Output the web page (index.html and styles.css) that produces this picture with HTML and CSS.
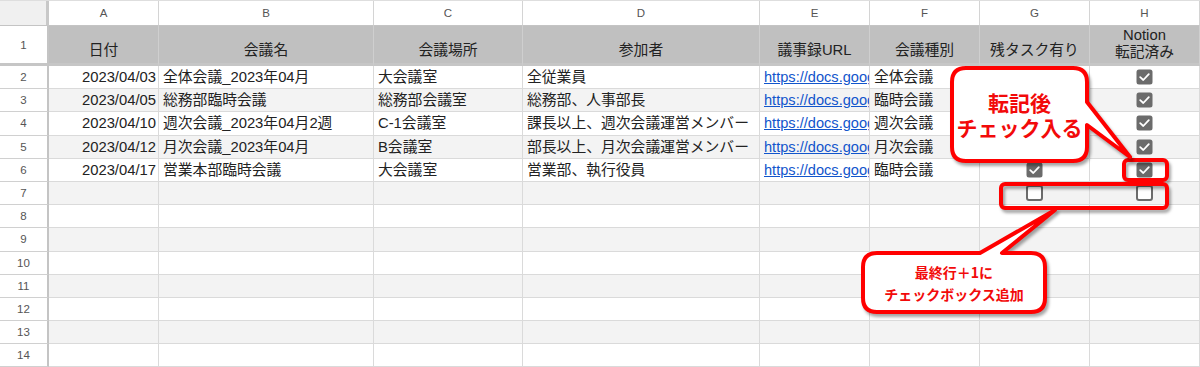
FILE: index.html
```html
<!DOCTYPE html>
<html lang="ja">
<head>
<meta charset="utf-8">
<title>会議一覧</title>
<link rel="stylesheet" href="styles.css">
</head>
<body>
<div class="page">
  <div class="sheet">
    <!-- column letters -->
    <div class="corner"></div>
    <div class="colh">A</div><div class="colh">B</div><div class="colh">C</div><div class="colh">D</div>
    <div class="colh">E</div><div class="colh">F</div><div class="colh">G</div><div class="colh">H</div>

    <!-- row 1 -->
    <div class="rowh rowh-1">1</div>
    <div class="hd">日付</div><div class="hd">会議名</div><div class="hd">会議場所</div><div class="hd">参加者</div>
    <div class="hd">議事録URL</div><div class="hd">会議種別</div><div class="hd">残タスク有り</div>
    <div class="hd hd-wrap">Notion<br>転記済み</div>

    <!-- row 2 -->
    <div class="rowh">2</div>
    <div class="c num">2023/04/03</div><div class="c">全体会議_2023年04月</div><div class="c">大会議室</div><div class="c">全従業員</div>
    <div class="c url"><span class="link">https://docs.goog</span></div><div class="c">全体会議</div>
    <div class="c mid"></div>
    <div class="c mid"><svg class="cb" viewBox="0 0 17 16"><rect x="0.5" y="0.5" width="16" height="15" rx="2.5" fill="#6b6b6b"/><path d="M4.2 8.2 L7.3 11 L12.8 5.2" stroke="#fff" stroke-width="1.8" fill="none" stroke-linecap="round" stroke-linejoin="round"/></svg></div>

    <!-- row 3 -->
    <div class="rowh">3</div>
    <div class="c b num">2023/04/05</div><div class="c b">総務部臨時会議</div><div class="c b">総務部会議室</div><div class="c b">総務部、人事部長</div>
    <div class="c b url"><span class="link">https://docs.goog</span></div><div class="c b">臨時会議</div>
    <div class="c b mid"></div>
    <div class="c b mid"><svg class="cb" viewBox="0 0 17 16"><rect x="0.5" y="0.5" width="16" height="15" rx="2.5" fill="#6b6b6b"/><path d="M4.2 8.2 L7.3 11 L12.8 5.2" stroke="#fff" stroke-width="1.8" fill="none" stroke-linecap="round" stroke-linejoin="round"/></svg></div>

    <!-- row 4 -->
    <div class="rowh">4</div>
    <div class="c num">2023/04/10</div><div class="c">週次会議_2023年04月2週</div><div class="c">C-1会議室</div><div class="c">課長以上、週次会議運営メンバー</div>
    <div class="c url"><span class="link">https://docs.goog</span></div><div class="c">週次会議</div>
    <div class="c mid"></div>
    <div class="c mid"><svg class="cb" viewBox="0 0 17 16"><rect x="0.5" y="0.5" width="16" height="15" rx="2.5" fill="#6b6b6b"/><path d="M4.2 8.2 L7.3 11 L12.8 5.2" stroke="#fff" stroke-width="1.8" fill="none" stroke-linecap="round" stroke-linejoin="round"/></svg></div>

    <!-- row 5 -->
    <div class="rowh">5</div>
    <div class="c b num">2023/04/12</div><div class="c b">月次会議_2023年04月</div><div class="c b">B会議室</div><div class="c b">部長以上、月次会議運営メンバー</div>
    <div class="c b url"><span class="link">https://docs.goog</span></div><div class="c b">月次会議</div>
    <div class="c b mid"></div>
    <div class="c b mid"><svg class="cb" viewBox="0 0 17 16"><rect x="0.5" y="0.5" width="16" height="15" rx="2.5" fill="#6b6b6b"/><path d="M4.2 8.2 L7.3 11 L12.8 5.2" stroke="#fff" stroke-width="1.8" fill="none" stroke-linecap="round" stroke-linejoin="round"/></svg></div>

    <!-- row 6 -->
    <div class="rowh">6</div>
    <div class="c num">2023/04/17</div><div class="c">営業本部臨時会議</div><div class="c">大会議室</div><div class="c">営業部、執行役員</div>
    <div class="c url"><span class="link">https://docs.goog</span></div><div class="c">臨時会議</div>
    <div class="c mid"><svg class="cb" viewBox="0 0 17 16"><rect x="0.5" y="0.5" width="16" height="15" rx="2.5" fill="#6b6b6b"/><path d="M4.2 8.2 L7.3 11 L12.8 5.2" stroke="#fff" stroke-width="1.8" fill="none" stroke-linecap="round" stroke-linejoin="round"/></svg></div>
    <div class="c mid"><svg class="cb" viewBox="0 0 17 16"><rect x="0.5" y="0.5" width="16" height="15" rx="2.5" fill="#6b6b6b"/><path d="M4.2 8.2 L7.3 11 L12.8 5.2" stroke="#fff" stroke-width="1.8" fill="none" stroke-linecap="round" stroke-linejoin="round"/></svg></div>

    <!-- row 7 -->
    <div class="rowh">7</div>
    <div class="c b"></div><div class="c b"></div><div class="c b"></div><div class="c b"></div>
    <div class="c b"></div><div class="c b"></div>
    <div class="c b mid"><svg class="cb" viewBox="0 0 17 16"><rect x="1" y="1" width="15" height="14" rx="2" fill="#fff" stroke="#6b6b6b" stroke-width="2"/></svg></div>
    <div class="c b mid"><svg class="cb" viewBox="0 0 17 16"><rect x="1" y="1" width="15" height="14" rx="2" fill="#fff" stroke="#6b6b6b" stroke-width="2"/></svg></div>

    <!-- rows 8-14 -->
    <div class="rowh">8</div>
    <div class="c"></div><div class="c"></div><div class="c"></div><div class="c"></div><div class="c"></div><div class="c"></div><div class="c"></div><div class="c"></div>
    <div class="rowh">9</div>
    <div class="c b"></div><div class="c b"></div><div class="c b"></div><div class="c b"></div><div class="c b"></div><div class="c b"></div><div class="c b"></div><div class="c b"></div>
    <div class="rowh">10</div>
    <div class="c"></div><div class="c"></div><div class="c"></div><div class="c"></div><div class="c"></div><div class="c"></div><div class="c"></div><div class="c"></div>
    <div class="rowh">11</div>
    <div class="c b"></div><div class="c b"></div><div class="c b"></div><div class="c b"></div><div class="c b"></div><div class="c b"></div><div class="c b"></div><div class="c b"></div>
    <div class="rowh">12</div>
    <div class="c"></div><div class="c"></div><div class="c"></div><div class="c"></div><div class="c"></div><div class="c"></div><div class="c"></div><div class="c"></div>
    <div class="rowh">13</div>
    <div class="c b"></div><div class="c b"></div><div class="c b"></div><div class="c b"></div><div class="c b"></div><div class="c b"></div><div class="c b"></div><div class="c b"></div>
    <div class="rowh">14</div>
    <div class="c"></div><div class="c"></div><div class="c"></div><div class="c"></div><div class="c"></div><div class="c"></div><div class="c"></div><div class="c"></div>
  </div>

  <!-- annotation overlay -->
  <svg class="overlay" viewBox="0 0 1200 367" width="1200" height="367">
    <g class="marks" fill="none" stroke="#ff0000" stroke-width="4" stroke-linejoin="round">
      <rect x="1124" y="160" width="43" height="20" rx="4"/>
      <rect x="1001" y="184" width="166" height="24" rx="4"/>
    </g>
    <g class="bubbles" fill="#fff" stroke="#ff0000" stroke-width="4" stroke-linejoin="round">
      <path d="M966 68 H1073 Q1087 68 1087 82 V102 L1130 157 L1087 125 V147 Q1087 161 1073 161 H966 Q952 161 952 147 V82 Q952 68 966 68 Z"/>
      <path d="M877 253 H980 L1055 210 L1002 253 H1031 Q1045 253 1045 267 V298 Q1045 312 1031 312 H877 Q863 312 863 298 V267 Q863 253 877 253 Z"/>
    </g>
  </svg>
  <div class="note note-1">転記後<br>チェック入る</div>
  <div class="note note-2">最終行＋1に<br>チェックボックス追加</div>
</div>
</body>
</html>
```
FILE: styles.css
```css
* { box-sizing: border-box; }
html, body { margin: 0; padding: 0; background: #fff; }
body {
  font-family: "Liberation Sans", Arial, "Noto Sans CJK JP", sans-serif;
  color: #222;
  width: 1200px;
  height: 367px;
  overflow: hidden;
}
.page { position: relative; width: 1200px; height: 367px; overflow: hidden; }

.sheet {
  display: grid;
  grid-template-columns: 49px 110px 215px 149px 237px 110px 110px 110px 110px;
  grid-template-rows: 25px 40px repeat(13, 23.2px);
  border-top: 1px solid #dedede;
  width: 1200px;
}

.corner {
  background: #f0f0f0;
  border-right: 3px solid #c8c8c8;
  border-bottom: 1px solid #c4c4c4;
}
.colh {
  display: flex; align-items: center; justify-content: center;
  font-size: 11.5px; color: #555;
  border-right: 1px solid #d4d4d4;
  border-bottom: 1px solid #c4c4c4;
}

.rowh {
  display: flex; align-items: center; justify-content: center;
  font-size: 11.5px; color: #555;
  background: #fff;
  border-right: 2px solid #c4c4c4;
  border-bottom: 1px solid #d0d0d0;
}
.rowh-1 { border-bottom: 3px solid #c6c6c6; }

.hd {
  display: flex; align-items: flex-end; justify-content: center;
  text-align: center;
  background: #c0c0c0;
  font-size: 14.8px; line-height: 17px;
  padding-bottom: 4px;
  border-right: 1px solid #cfcfcf;
  border-bottom: 3px solid #c6c6c6;
  white-space: nowrap;
}
.hd-wrap { padding-bottom: 2px; }

.c {
  display: flex; align-items: center;
  font-size: 14.8px; line-height: 17px;
  padding: 1px 4px 0 4px;
  border-right: 1px solid #dadada;
  border-bottom: 1px solid #dadada;
  white-space: nowrap;
  overflow: hidden;
  background: #fff;
}
.c.b { background: #f3f3f3; }
.c.num { justify-content: flex-end; padding-right: 2px; }
.c.mid { justify-content: center; padding: 0; }
.c.url { padding-right: 0; font-size: 14.6px; }

.link { color: #1155cc; text-decoration: underline; }

.cb { width: 17px; height: 16px; display: block; }

.overlay {
  position: absolute; left: 0; top: 0;
  width: 1200px; height: 367px;
  pointer-events: none;
}
.marks, .bubbles { filter: drop-shadow(2px 3px 1.5px rgba(0, 0, 0, 0.35)); }

.note {
  position: absolute;
  display: flex; align-items: center; justify-content: center;
  text-align: center;
  color: #f20a0a;
  font-weight: bold;
  font-family: "Noto Sans CJK JP", "Liberation Sans", sans-serif;
}
.note-1 {
  left: 952px; top: 68px; width: 135px; height: 93px;
  font-size: 21px; line-height: 25px;
}
.note-2 {
  left: 863px; top: 253px; width: 182px; height: 59px;
  font-size: 14px; line-height: 22px;
}
```
